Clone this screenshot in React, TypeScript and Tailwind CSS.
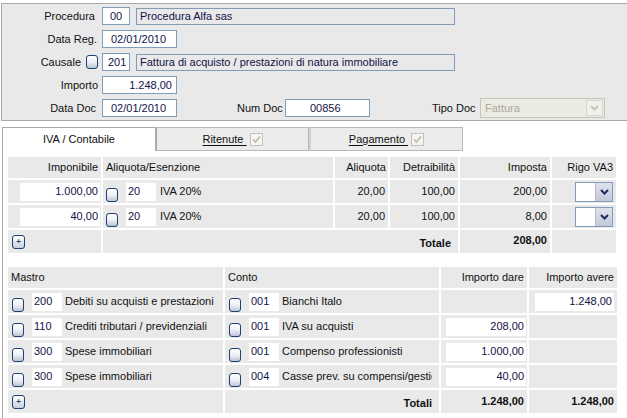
function LookupBtn({ className = "" }: { className?: string }) {
  return (
    <span
      className={
        "block w-[12px] h-[14px] shrink-0 rounded-[3px] border border-[#20406f] bg-linear-to-b from-white via-[#eef0f5] to-[#bfc5d6] " +
        className
      }
    />
  );
}

function PlusBtn() {
  return (
    <span className="flex items-center justify-center w-[13px] h-[14px] shrink-0 rounded-[3px] border border-[#20406f] bg-linear-to-b from-white to-[#c9cedc]">
      <span className="text-[8px] leading-none text-[#20406f] font-bold">+</span>
    </span>
  );
}

function Chevron({ color }: { color: string }) {
  return (
    <svg width="9" height="6" viewBox="0 0 9 6">
      <path d="M1 1 L4.5 4.5 L8 1" fill="none" stroke={color} strokeWidth="2" />
    </svg>
  );
}

function Select() {
  return (
    <div className="flex w-[38px] h-[20px] border border-[#7f9db9] bg-white">
      <div className="flex-1" />
      <div className="w-[17px] h-full flex items-center justify-center bg-linear-to-b from-[#dfe2ee] to-[#c3c7da] border-l border-[#b4b9cf]">
        <Chevron color="#1e2a5a" />
      </div>
    </div>
  );
}

function DisabledCheck() {
  return (
    <svg width="13" height="13" viewBox="0 0 13 13" className="shrink-0">
      <rect x="0.5" y="0.5" width="12" height="12" fill="#f4f4f0" stroke="#c4c2b4" />
      <path d="M3 6.5 L5.5 9 L10 3.5" fill="none" stroke="#bdbaa8" strokeWidth="1.6" />
    </svg>
  );
}

function Field({ w, right, children }: { w: string; right?: boolean; children: React.ReactNode }) {
  return (
    <div
      className={`${w} h-[18px] border border-[#7f9db9] bg-white flex items-center px-[4px] text-[#121248] ${
        right ? "justify-end" : ""
      }`}
    >
      {children}
    </div>
  );
}

function Cell({ className = "", children }: { className?: string; children?: React.ReactNode }) {
  return <div className={"bg-[#e9e9e9] flex items-center min-w-0 " + className}>{children}</div>;
}

function WhiteBox({ w, right, children }: { w: string; right?: boolean; children: React.ReactNode }) {
  return (
    <div className={`${w} h-[18px] bg-white flex items-center px-[2px] text-[#121248] ${right ? "justify-end" : ""}`}>
      {children}
    </div>
  );
}

const ivaRows = [
  { imp: "1.000,00", imposta: "200,00" },
  { imp: "40,00", imposta: "8,00" },
];

const contiRows = [
  { m: "200", md: "Debiti su acquisti e prestazioni", c: "001", cd: "Bianchi Italo", dare: "", avere: "1.248,00" },
  { m: "110", md: "Crediti tributari / previdenziali", c: "001", cd: "IVA su acquisti", dare: "208,00", avere: "" },
  { m: "300", md: "Spese immobiliari", c: "001", cd: "Compenso professionisti", dare: "1.000,00", avere: "" },
  { m: "300", md: "Spese immobiliari", c: "004", cd: "Casse prev. su compensi/gestione", dare: "40,00", avere: "" },
];

export default function App() {
  return (
    <div className="w-[627px] h-[418px] overflow-hidden bg-white font-['Liberation_Sans',Arial,sans-serif] text-[11px] text-[#111] leading-none">
      {/* testata */}
      <div className="mt-[3px] ml-[1px] border-t border-b border-l border-[#a9a9a9] bg-[#e9e9e9] pt-[3px] pb-[3px] flex flex-col gap-[5px]">
        <div className="flex items-center h-[18px]">
          <div className="w-[100px] text-right pr-[7px]">Procedura</div>
          <Field w="w-[28px]">
            <span className="pl-[3px]">00</span>
          </Field>
          <div className="ml-[6px] w-[319px] h-[17px] border border-[#7f9db9] flex items-center px-[3px] text-[#121248]">
            Procedura Alfa sas
          </div>
        </div>
        <div className="flex items-center h-[18px]">
          <div className="w-[100px] text-right pr-[5px]">Data Reg.</div>
          <Field w="w-[75px]">
            <span className="pl-[4px]">02/01/2010</span>
          </Field>
        </div>
        <div className="flex items-center h-[18px]">
          <div className="w-[100px] flex justify-end items-center gap-[5px] pr-[4px]">
            <span>Causale</span>
            <LookupBtn />
          </div>
          <Field w="w-[28px]">
            <span className="pl-[1px]">201</span>
          </Field>
          <div className="ml-[6px] w-[319px] h-[17px] border border-[#7f9db9] flex items-center px-[3px] text-[#121248]">
            Fattura di acquisto / prestazioni di natura immobiliare
          </div>
        </div>
        <div className="flex items-center h-[18px]">
          <div className="w-[100px] text-right pr-[4px]">Importo</div>
          <Field w="w-[75px]" right>
            1.248,00
          </Field>
        </div>
        <div className="flex items-center h-[18px]">
          <div className="w-[100px] text-right pr-[6px]">Data Doc</div>
          <Field w="w-[75px]">
            <span className="pl-[4px]">02/01/2010</span>
          </Field>
          <div className="ml-[60px] w-[48px]">Num Doc</div>
          <Field w="w-[85px]">
            <span className="pl-[20px]">00856</span>
          </Field>
          <div className="ml-[62px] w-[48px]">Tipo Doc</div>
          <div className="flex w-[125px] h-[20px] border border-[#c9c7ba] bg-[#ebebe4]">
            <div className="flex-1 flex items-center pl-[4px] text-[#aca899]">Fattura</div>
            <div className="w-[17px] m-[1px] flex items-center justify-center bg-[#f1f1ec] border border-[#d8d6cc]">
              <Chevron color="#c8c6bb" />
            </div>
          </div>
        </div>
      </div>

      {/* schede */}
      <div className="mt-[6px] ml-[2px] flex h-[24px]">
        <div className="w-[153px] bg-white border-t border-l border-[#a9a9a9] flex items-center justify-center">
          IVA / Contabile
        </div>
        <div className="w-[154px] bg-[#ececec] border-t border-b border-[#b9b9b9] border-l-2 border-l-[#a9a9a9] border-r border-r-[#b9b9b9] flex items-center justify-center gap-[3px]">
          <span className="underline underline-offset-2">Ritenute&nbsp;</span>
          <DisabledCheck />
        </div>
        <div className="w-[154px] bg-[#ececec] border-t border-b border-r border-[#b9b9b9] border-l-2 border-l-[#d0d0d0] flex items-center justify-center gap-[3px]">
          <span className="underline underline-offset-2">Pagamento&nbsp;</span>
          <DisabledCheck />
        </div>
      </div>

      <div className="ml-[2px] border-l border-[#a9a9a9] bg-white pl-[5px] pt-[6px] h-[270px]">
        {/* IVA */}
        <div className="grid grid-cols-[93px_230px_53px_68px_90px_64px] grid-rows-[21px_23px_23px_23px] gap-[2px] w-[608px]">
          <Cell className="justify-end pr-[3px]">Imponibile</Cell>
          <Cell className="pl-[3px]">Aliquota/Esenzione</Cell>
          <Cell className="justify-end pr-[2px]">Aliquota</Cell>
          <Cell className="justify-end pr-[3px]">Detraibilità</Cell>
          <Cell className="justify-end pr-[3px]">Imposta</Cell>
          <Cell className="justify-end pr-[3px]">Rigo VA3</Cell>
          {ivaRows.map((r, i) => (
            <div key={i} className="contents">
              <Cell className="justify-end pr-[1px]">
                <WhiteBox w="w-[80px]" right>
                  {r.imp}
                </WhiteBox>
              </Cell>
              <Cell className="pl-[3px]">
                <LookupBtn className="mt-[7px]" />
                <div className="ml-[8px]">
                  <WhiteBox w="w-[30px]">20</WhiteBox>
                </div>
                <span className="ml-[4px]">IVA 20%</span>
              </Cell>
              <Cell className="justify-end pr-[3px]">20,00</Cell>
              <Cell className="justify-end pr-[3px]">100,00</Cell>
              <Cell className="justify-end pr-[3px]">{r.imposta}</Cell>
              <Cell className="justify-end pr-[3px]">
                <Select />
              </Cell>
            </div>
          ))}
          <Cell className="pl-[4px]">
            <PlusBtn />
          </Cell>
          <Cell className="col-span-3 justify-end pr-[7px] font-bold pt-[3px]">Totale</Cell>
          <Cell className="justify-end pr-[3px] font-bold pb-[2px]">208,00</Cell>
          <Cell />
        </div>

        {/* Conti */}
        <div className="mt-[14px] grid grid-cols-[215px_214px_86px_88px] grid-rows-[21px_23px_23px_23px_23px_23px] gap-[2px] w-[609px]">
          <Cell className="pl-[3px]">Mastro</Cell>
          <Cell className="pl-[3px]">Conto</Cell>
          <Cell className="justify-end pr-[3px]">Importo dare</Cell>
          <Cell className="justify-end pr-[3px]">Importo avere</Cell>
          {contiRows.map((r, i) => (
            <div key={i} className="contents">
              <Cell className="pl-[4px]">
                <LookupBtn className="mt-[7px]" />
                <div className="ml-[8px]">
                  <WhiteBox w="w-[30px]">{r.m}</WhiteBox>
                </div>
                <span className="ml-[3px] whitespace-nowrap">{r.md}</span>
              </Cell>
              <Cell className="pl-[4px]">
                <LookupBtn className="mt-[7px]" />
                <div className="ml-[8px]">
                  <WhiteBox w="w-[30px]">{r.c}</WhiteBox>
                </div>
                <span className="ml-[3px] w-[150px] overflow-hidden whitespace-nowrap">{r.cd}</span>
              </Cell>
              <Cell className="justify-end pr-[1px]">
                {r.dare && (
                  <WhiteBox w="w-[80px]" right>
                    {r.dare}
                  </WhiteBox>
                )}
              </Cell>
              <Cell className="justify-end pr-[3px]">
                {r.avere && (
                  <WhiteBox w="w-[79px]" right>
                    {r.avere}
                  </WhiteBox>
                )}
              </Cell>
            </div>
          ))}
          <Cell className="pl-[4px]">
            <PlusBtn />
          </Cell>
          <Cell className="justify-end pr-[7px] font-bold pt-[3px]">Totali</Cell>
          <Cell className="justify-end pr-[3px] font-bold">1.248,00</Cell>
          <Cell className="justify-end pr-[3px] font-bold">1.248,00</Cell>
        </div>
      </div>
    </div>
  );
}
